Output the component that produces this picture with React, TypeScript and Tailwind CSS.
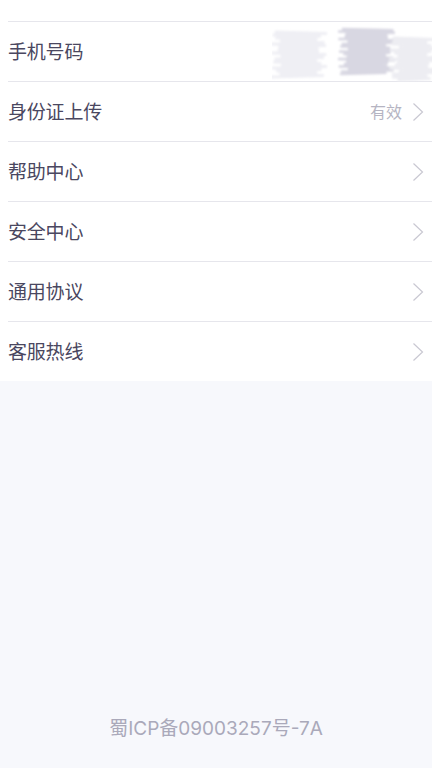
import { ReactNode } from 'react'

const ROWS: { label: string; value?: string; arrow: boolean; masked?: boolean }[] = [
  { label: '手机号码', arrow: false, masked: true },
  { label: '身份证上传', value: '有效', arrow: true },
  { label: '帮助中心', arrow: true },
  { label: '安全中心', arrow: true },
  { label: '通用协议', arrow: true },
  { label: '客服热线', arrow: true },
]

function Chevron() {
  return (
    <svg width="12" height="20" viewBox="0 0 12 20" className="flex-shrink-0">
      <path d="M1.5 1.5 L10.5 10 L1.5 18.5" fill="none" stroke="#c9c8d2" strokeWidth="1.2" />
    </svg>
  )
}

// zig-zag strokes used to imitate the pencil scribble over the phone number
function zig(x: number, y: number, w: number, h: number, step: number, seed: number) {
  let d = `M${x} ${y}`
  let i = seed
  for (let yy = y; yy < y + h; yy += step) {
    const a = Math.sin(i * 1.7) * 5
    const b = Math.cos(i * 2.3) * 5
    d += ` L${x + w + a} ${yy + step / 2} L${x + b} ${yy + step}`
    i++
  }
  return d
}

function Masked() {
  return (
    <svg width="160" height="60" viewBox="0 0 160 60" className="block">
      <defs>
        <filter id="soft">
          <feGaussianBlur stdDeviation="0.9" />
        </filter>
      </defs>
      <g filter="url(#soft)" fill="none" strokeLinecap="round">
        <path d={zig(4, 10, 46, 44, 3, 1)} stroke="#efeff4" strokeWidth="3" />
        <path d={zig(71, 7, 48, 44, 2.5, 4)} stroke="#d8d7e2" strokeWidth="2.6" />
        <path d={zig(122, 16, 38, 42, 3, 9)} stroke="#ededf2" strokeWidth="3" />
      </g>
    </svg>
  )
}

function Row({ children, right }: { children: ReactNode; right?: ReactNode }) {
  return (
    <div className="flex items-center h-[60px] border-t border-[#e6e6ec] ml-2 pr-2">
      <span className="flex-1 text-[19px] tracking-[-0.2px] text-[#4a4760] pt-[4px]">{children}</span>
      {right}
    </div>
  )
}

export default function App() {
  return (
    <div
      className="w-[432px] h-[768px] bg-[#f7f8fc] flex flex-col overflow-hidden"
      style={{ fontFamily: 'Inter, "Noto Sans CJK SC", sans-serif' }}
    >
      <div className="bg-white pt-[21px]">
        {ROWS.map(r => (
          <Row
            key={r.label}
            right={
              r.masked ? (
                <div className="h-full -mr-2"><Masked /></div>
              ) : (
                <div className="flex items-center gap-[10px]">
                  {r.value && <span className="text-[16px] text-[#b5b4c2]">{r.value}</span>}
                  {r.arrow && <Chevron />}
                </div>
              )
            }
          >
            {r.label}
          </Row>
        ))}
      </div>

      <div className="flex-1" />
      <p className="text-center text-[19px] text-[#aaa9ba] pb-[25px]">蜀ICP备09003257号-7A</p>
    </div>
  )
}
